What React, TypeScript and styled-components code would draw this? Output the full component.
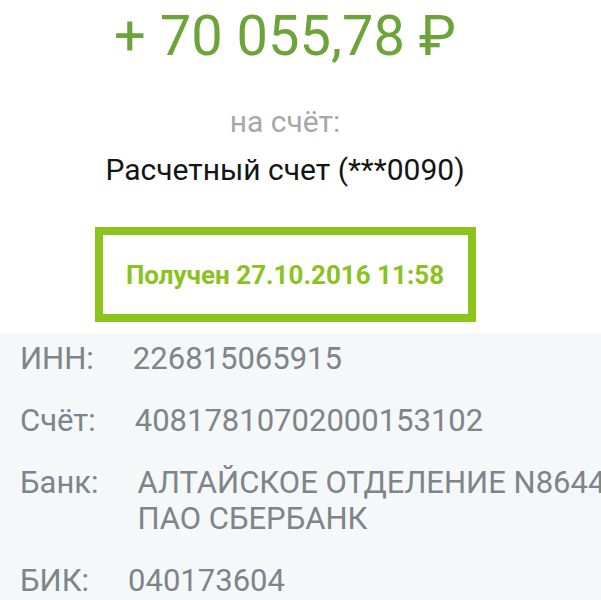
import React from "react";
import styled, { createGlobalStyle } from "styled-components";

const Global = createGlobalStyle`
  html, body { margin: 0; padding: 0; background: #ffffff; }
  body { font-family: Roboto, "Noto Sans", "Liberation Sans", sans-serif; overflow: hidden; }
  * { box-sizing: border-box; }
`;

const Page = styled.div`
  width: 601px;
  height: 600px;
  overflow: hidden;
  display: flex;
  flex-direction: column;
`;

const Header = styled.div`
  width: 570px;
  display: flex;
  flex-direction: column;
  align-items: center;
  padding-top: 3px;
`;

const Amount = styled.div`
  font-size: 56px;
  line-height: 66px;
  color: #6ca43a;
  white-space: nowrap;
`;

const Caption = styled.div`
  margin-top: 35px;
  font-size: 30px;
  line-height: 35px;
  color: #a8a8a8;
`;

const Account = styled.div`
  margin-top: 13px;
  font-size: 30px;
  line-height: 35px;
  color: #141414;
  white-space: nowrap;
`;

const StatusBox = styled.div`
  margin-top: 40px;
  width: 381px;
  height: 95px;
  border: 8px solid #8dc41b;
  display: flex;
  align-items: center;
  justify-content: center;
  font-size: 26px;
  font-weight: 700;
  color: #8bc21f;
  white-space: nowrap;
`;

const Details = styled.div`
  margin-top: 11px;
  flex: 1;
  background: #f4f8f9;
  padding: 8px 0 0 20px;
  display: flex;
  flex-direction: column;
  gap: 26px;
`;

const Row = styled.div`
  display: flex;
  gap: 39px;
  font-size: 31px;
  line-height: 36px;
  color: #7e8489;
  white-space: nowrap;
`;

const Label = styled.div`
  flex: none;
`;

const Value = styled.div`
  display: flex;
  flex-direction: column;
`;

const rows: { label: string; lines: string[] }[] = [
  { label: "ИНН:", lines: ["226815065915"] },
  { label: "Счёт:", lines: ["40817810702000153102"] },
  { label: "Банк:", lines: ["АЛТАЙСКОЕ ОТДЕЛЕНИЕ N8644", "ПАО СБЕРБАНК"] },
  { label: "БИК:", lines: ["040173604"] },
];

export default function App() {
  return (
    <>
      <Global />
      <Page>
        <Header>
          <Amount>+ 70 055,78 ₽</Amount>
          <Caption>на счёт:</Caption>
          <Account>Расчетный счет (***0090)</Account>
          <StatusBox>Получен 27.10.2016 11:58</StatusBox>
        </Header>
        <Details>
          {rows.map((r) => (
            <Row key={r.label}>
              <Label>{r.label}</Label>
              <Value>
                {r.lines.map((l) => (
                  <span key={l}>{l}</span>
                ))}
              </Value>
            </Row>
          ))}
        </Details>
      </Page>
    </>
  );
}
